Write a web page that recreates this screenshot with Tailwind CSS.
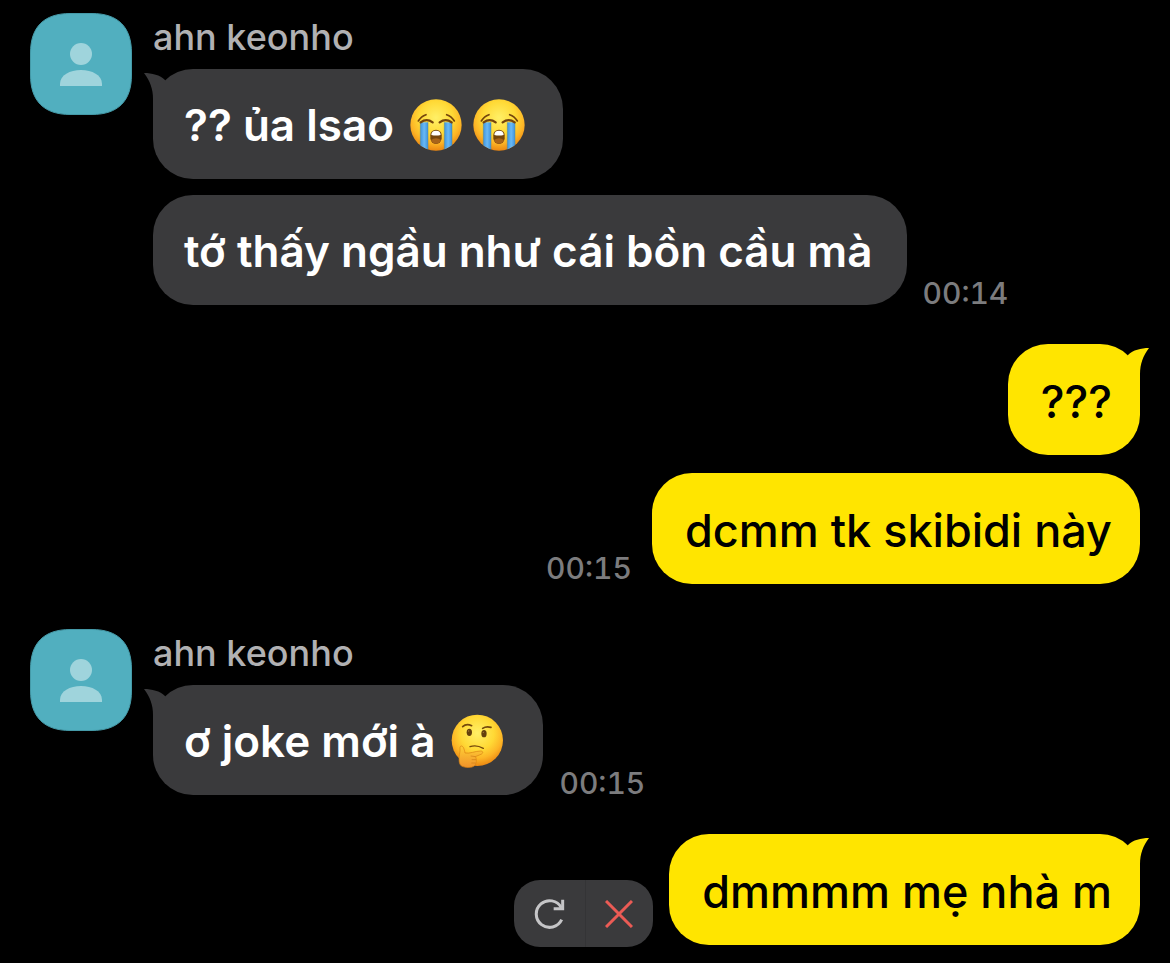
<!DOCTYPE html>
<html lang="vi">

<head>
  <meta charset="UTF-8">
  <meta name="viewport" content="width=device-width, initial-scale=1">
  <title>ahn keonho</title>
  <script src="https://cdn.jsdelivr.net/npm/@tailwindcss/browser@4"></script>
</head>

<body class="bg-black min-h-screen font-['Inter','Noto_Sans',sans-serif] font-medium">

  <!-- shared shapes -->
  <svg class="absolute size-0" aria-hidden="true">
    <defs>
      <radialGradient id="face" cx="50%" cy="36%" r="65%">
        <stop offset="0" stop-color="#fff067" />
        <stop offset=".5" stop-color="#ffd935" />
        <stop offset=".76" stop-color="#fdb526" />
        <stop offset="1" stop-color="#ea8410" />
      </radialGradient>
      <linearGradient id="tear" x1="0" x2="1" y1="0" y2="0">
        <stop offset="0" stop-color="#3f93dc" />
        <stop offset=".5" stop-color="#69b9f5" />
        <stop offset="1" stop-color="#3f93dc" />
      </linearGradient>
      <linearGradient id="hand" x1="0" x2="0" y1="0" y2="1">
        <stop offset="0" stop-color="#ffcf35" />
        <stop offset="1" stop-color="#f0922a" />
      </linearGradient>
      <clipPath id="face-clip">
        <circle cx="135" cy="195" r="77" />
      </clipPath>
    </defs>

    <symbol id="avatar" viewBox="0 0 102 102">
      <path d="M40 .5H62C88 .5 101.500 14 101.500 40V62C101.500 88 88 101.500 62 101.500H40C14 101.500 .5 88 .5 62V40C.5 14 14 .5 40 .5Z" fill="#51afbf" stroke="#459aa8" />
      <circle cx="51" cy="41" r="11" fill="#9fd4dc" />
      <path d="M30 73V71C30 62 40 57 51 57S72 62 72 71V73Z" fill="#9fd4dc" />
    </symbol>

    <symbol id="tail" viewBox="0 0 21 40">
      <path d="M0 0C8 0 16 2 21 7V40H9V26C9 16 6 8 0 0Z" fill="currentColor" />
    </symbol>

    <symbol id="sob" viewBox="57 117 156 156">
      <circle cx="135" cy="195" r="77" fill="url(#face)" />
      <g clip-path="url(#face-clip)">
        <rect x="88" y="187" width="23" height="90" fill="url(#tear)" />
        <rect x="160" y="187" width="23" height="90" fill="url(#tear)" />
        <path d="M88 187V275M111 187V275M160 187V275M183 187V275" stroke="#4f8a9e" stroke-width="1.500" />
      </g>
      <g fill="none" stroke="#75450c" stroke-width="5" stroke-linecap="round">
        <path d="M82 183Q90 169 105 164" />
        <path d="M190 183Q182 169 167 164" />
        <path d="M89 187Q107 174 125 187" stroke-width="7" />
        <path d="M146 187Q164 174 182 187" stroke-width="7" />
      </g>
      <rect x="118" y="209" width="34" height="43" rx="17" fill="#75450c" />
      <path d="M121 225Q121 212 135 212T149 225Q135 228 121 225Z" fill="#fff" />
      <path d="M120 240Q135 229 150 240Q147 251 135 251T120 240Z" fill="#a9641a" />
    </symbol>

    <symbol id="thinking" viewBox="66 102 156 162">
      <circle cx="145" cy="181" r="77" fill="url(#face)" />
      <ellipse cx="121" cy="157" rx="8" ry="11" fill="#63400c" />
      <ellipse cx="165" cy="161" rx="8" ry="11" fill="#63400c" />
      <circle cx="119" cy="153" r="2" fill="#a87c38" />
      <circle cx="163" cy="157" r="2" fill="#a87c38" />
      <g fill="none" stroke="#75490c" stroke-width="5" stroke-linecap="round">
        <path d="M101 140Q112 129 128 137" />
        <path d="M161 145Q171 138 186 142" />
        <path d="M123 200Q142 193 163 205" stroke-width="4" />
      </g>
      <path d="M97 198C103 198 106 208 108 219C122 222 138 213 155 213C163 213 163 220 156 223L139 230C144 236 143 254 134 259C123 265 103 263 95 256C87 247 91 226 93 213C93 204 92 198 97 198Z" fill="url(#hand)" stroke="#d98212" stroke-width="2" />
      <path d="M125 228L140 230M128 239H141M127 249H139" stroke="#cf7b15" stroke-width="2" fill="none" />
    </symbol>
  </svg>

  <main class="flex flex-col px-[30px] pt-[13px] pb-4">

    <section class="flex items-start gap-[21px]">
      <svg class="size-[102px] shrink-0" role="img" aria-label="ahn keonho">
        <use href="#avatar" />
      </svg>
      <div class="flex flex-col items-start">
        <h2 class="text-[36px] leading-[48px] text-[#b1b1b3]">ahn keonho</h2>
        <div class="relative mt-2 flex items-center rounded-[40px] bg-[#3a3a3c] pt-[25px] pb-[23px] pl-[31px] pr-[38px] text-[44px] leading-[62px] font-semibold text-white">
          <svg class="absolute -left-[9px] top-1 w-[21px] h-10 text-[#3a3a3c]" aria-hidden="true">
            <use href="#tail" />
          </svg>
          <p>?? ủa lsao</p>
          <svg class="ml-4 size-[52px]" role="img" aria-label="😭">
            <use href="#sob" />
          </svg>
          <svg class="ml-[11px] size-[52px]" role="img" aria-label="😭">
            <use href="#sob" />
          </svg>
        </div>
        <div class="mt-4 flex items-end gap-4">
          <p class="rounded-[40px] bg-[#3a3a3c] pt-[25px] pb-[23px] pl-[31px] pr-[34px] text-[44px] leading-[62px] font-semibold text-white">tớ thấy ngầu như cái bồn cầu mà</p>
          <time class="text-[30px] leading-6 tabular-nums text-[#7c7c7e]">00:14</time>
        </div>
      </div>
    </section>

    <section class="mt-[39px] flex flex-col items-end gap-[18px]">
      <div class="relative rounded-[40px] bg-[#ffe500] pt-[26px] pb-[22px] pl-[33px] pr-7 text-[45px] leading-[63px] text-black">
        <svg class="absolute -right-[9px] top-1 w-[21px] h-10 -scale-x-100 text-[#ffe500]" aria-hidden="true">
          <use href="#tail" />
        </svg>
        <p>???</p>
      </div>
      <div class="flex items-end gap-5">
        <time class="pb-1 text-[30px] leading-6 tabular-nums text-[#7c7c7e]">00:15</time>
        <p class="rounded-[40px] bg-[#ffe500] pt-[26px] pb-[22px] pl-[33px] pr-7 text-[45px] leading-[63px] text-black">dcmm tk skibidi này</p>
      </div>
    </section>

    <section class="mt-[45px] flex items-start gap-[21px]">
      <svg class="size-[102px] shrink-0" role="img" aria-label="ahn keonho">
        <use href="#avatar" />
      </svg>
      <div class="flex flex-col items-start">
        <h2 class="text-[36px] leading-[48px] text-[#b1b1b3]">ahn keonho</h2>
        <div class="mt-2 flex items-end gap-4">
          <div class="relative flex items-center rounded-[40px] bg-[#3a3a3c] pt-[25px] pb-[23px] pl-[31px] pr-10 text-[44px] leading-[62px] font-semibold text-white">
            <svg class="absolute -left-[9px] top-1 w-[21px] h-10 text-[#3a3a3c]" aria-hidden="true">
              <use href="#tail" />
            </svg>
            <p>ơ joke mới à</p>
            <svg class="ml-4 h-[54px] w-[52px]" role="img" aria-label="🤔">
              <use href="#thinking" />
            </svg>
          </div>
          <time class="text-[30px] leading-6 tabular-nums text-[#7c7c7e]">00:15</time>
        </div>
      </div>
    </section>

    <section class="mt-[39px] flex items-end justify-end gap-4">
      <!-- unsent message: retry / delete -->
      <div class="-mb-0.5 flex h-[67px] overflow-hidden rounded-[26px] bg-[#3a3a3c]">
        <button type="button" aria-label="Gửi lại" class="flex w-[72px] items-center justify-center border-r border-[#343436]">
          <svg class="w-[33px] h-[31px]" viewBox="108 234 99 93" fill="none" stroke="#c5c5c7" stroke-width="9" aria-hidden="true">
            <path d="M193 263A40 40 0 1 0 194 299" />
            <path d="M197 239V266H170" />
          </svg>
        </button>
        <button type="button" aria-label="Xóa" class="flex w-[67px] items-center justify-center pr-0.5">
          <svg class="size-7" viewBox="0 0 28 28" fill="none" stroke="#eb5b55" stroke-width="3" aria-hidden="true">
            <path d="M1 1L27 27M27 1L1 27" />
          </svg>
        </button>
      </div>
      <div class="relative rounded-[40px] bg-[#ffe500] pt-[26px] pb-[22px] pl-[33px] pr-7 text-[45px] leading-[63px] text-black">
        <svg class="absolute -right-[9px] top-1 w-[21px] h-10 -scale-x-100 text-[#ffe500]" aria-hidden="true">
          <use href="#tail" />
        </svg>
        <p>dmmmm mẹ nhà m</p>
      </div>
    </section>

  </main>

</body>

</html>
